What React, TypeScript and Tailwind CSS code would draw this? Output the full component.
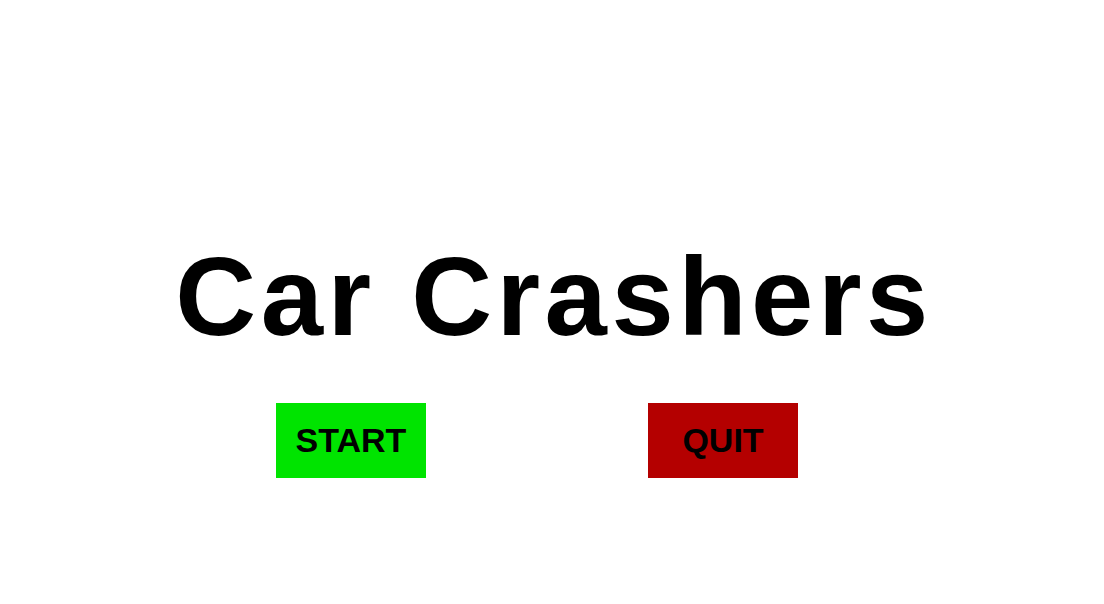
import React from 'react';

const App = () => {
  return (
    <div className="w-[1104px] h-[604px] bg-white flex flex-col items-center font-['Liberation_Sans',Arial,sans-serif]">
      <h1 className="mt-[237px] pl-[4px] text-[112px] leading-[120px] font-bold tracking-[4.5px] text-black">
        Car Crashers
      </h1>
      <div className="mt-[46px] w-full flex gap-[222px] pl-[276px]">
        <button className="w-[150px] h-[75px] bg-[#00e400] text-black text-[34px] font-bold">
          START
        </button>
        <button className="w-[150px] h-[75px] bg-[#b40000] text-black text-[34px] font-bold">
          QUIT
        </button>
      </div>
    </div>
  );
};

export default App;
